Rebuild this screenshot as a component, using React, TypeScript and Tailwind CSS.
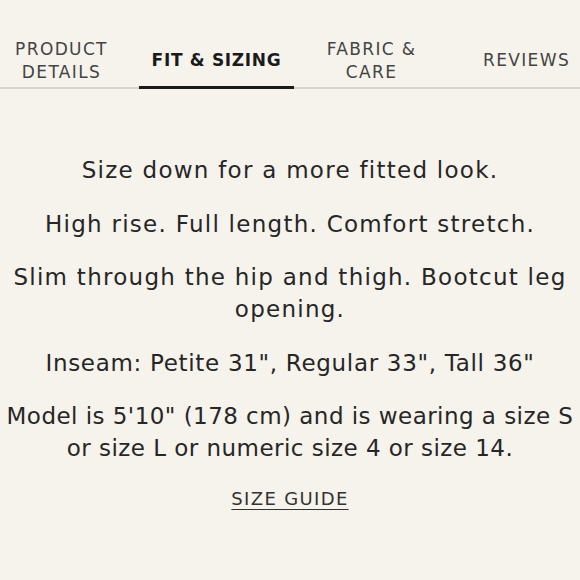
import React from "react";

const tabs = [
  { label: ["PRODUCT", "DETAILS"], active: false },
  { label: ["FIT & SIZING"], active: true },
  { label: ["FABRIC &", "CARE"], active: false },
  { label: ["REVIEWS"], active: false },
];

export default function App() {
  return (
    <div
      className="w-[580px] h-[580px] overflow-hidden bg-[#f6f3ec] text-[#262626]"
      style={{ fontFamily: '"DejaVu Sans", Verdana, sans-serif' }}
    >
      <div className="relative border-b-2 border-[#d6d3cc]">
        <div className="flex -ml-4 h-[87px]">
          {tabs.map((t, i) => (
            <div
              key={i}
              className={
                "w-[155px] shrink-0 flex flex-col items-center justify-center pt-[35px] text-[17px] leading-[23px] text-center -mb-[2px] " +
                (t.active
                  ? "font-bold tracking-[0.04em] text-[#1a1a1a] border-b-[3px] border-[#1a1a1a]"
                  : "tracking-[0.08em] text-[#444] border-b-[3px] border-transparent")
              }
            >
              {t.label.map((l, j) => (
                <span key={j}>{l}</span>
              ))}
            </div>
          ))}
        </div>
      </div>
      <div className="flex flex-col items-center text-center text-[23px] leading-[32px] tracking-[0.055em] pt-[65px] gap-[21.5px]">
        <p className="px-[6px]">Size down for a more fitted look.</p>
        <p className="px-[6px]">High rise. Full length. Comfort stretch.</p>
        <p className="px-[6px]">Slim through the hip and thigh. Bootcut leg opening.</p>
        <p className="px-[8px] tracking-[0.03em]">Inseam: Petite 31", Regular 33", Tall 36"</p>
        <p className="tracking-[0.02em]">Model is 5'10" (178 cm) and is wearing a size S or size L or numeric size 4 or size 14.</p>
        <p className="text-[18px] tracking-[0.075em] underline underline-offset-[4px] mt-[-3px] text-[#333]">SIZE GUIDE</p>
      </div>
    </div>
  );
}
